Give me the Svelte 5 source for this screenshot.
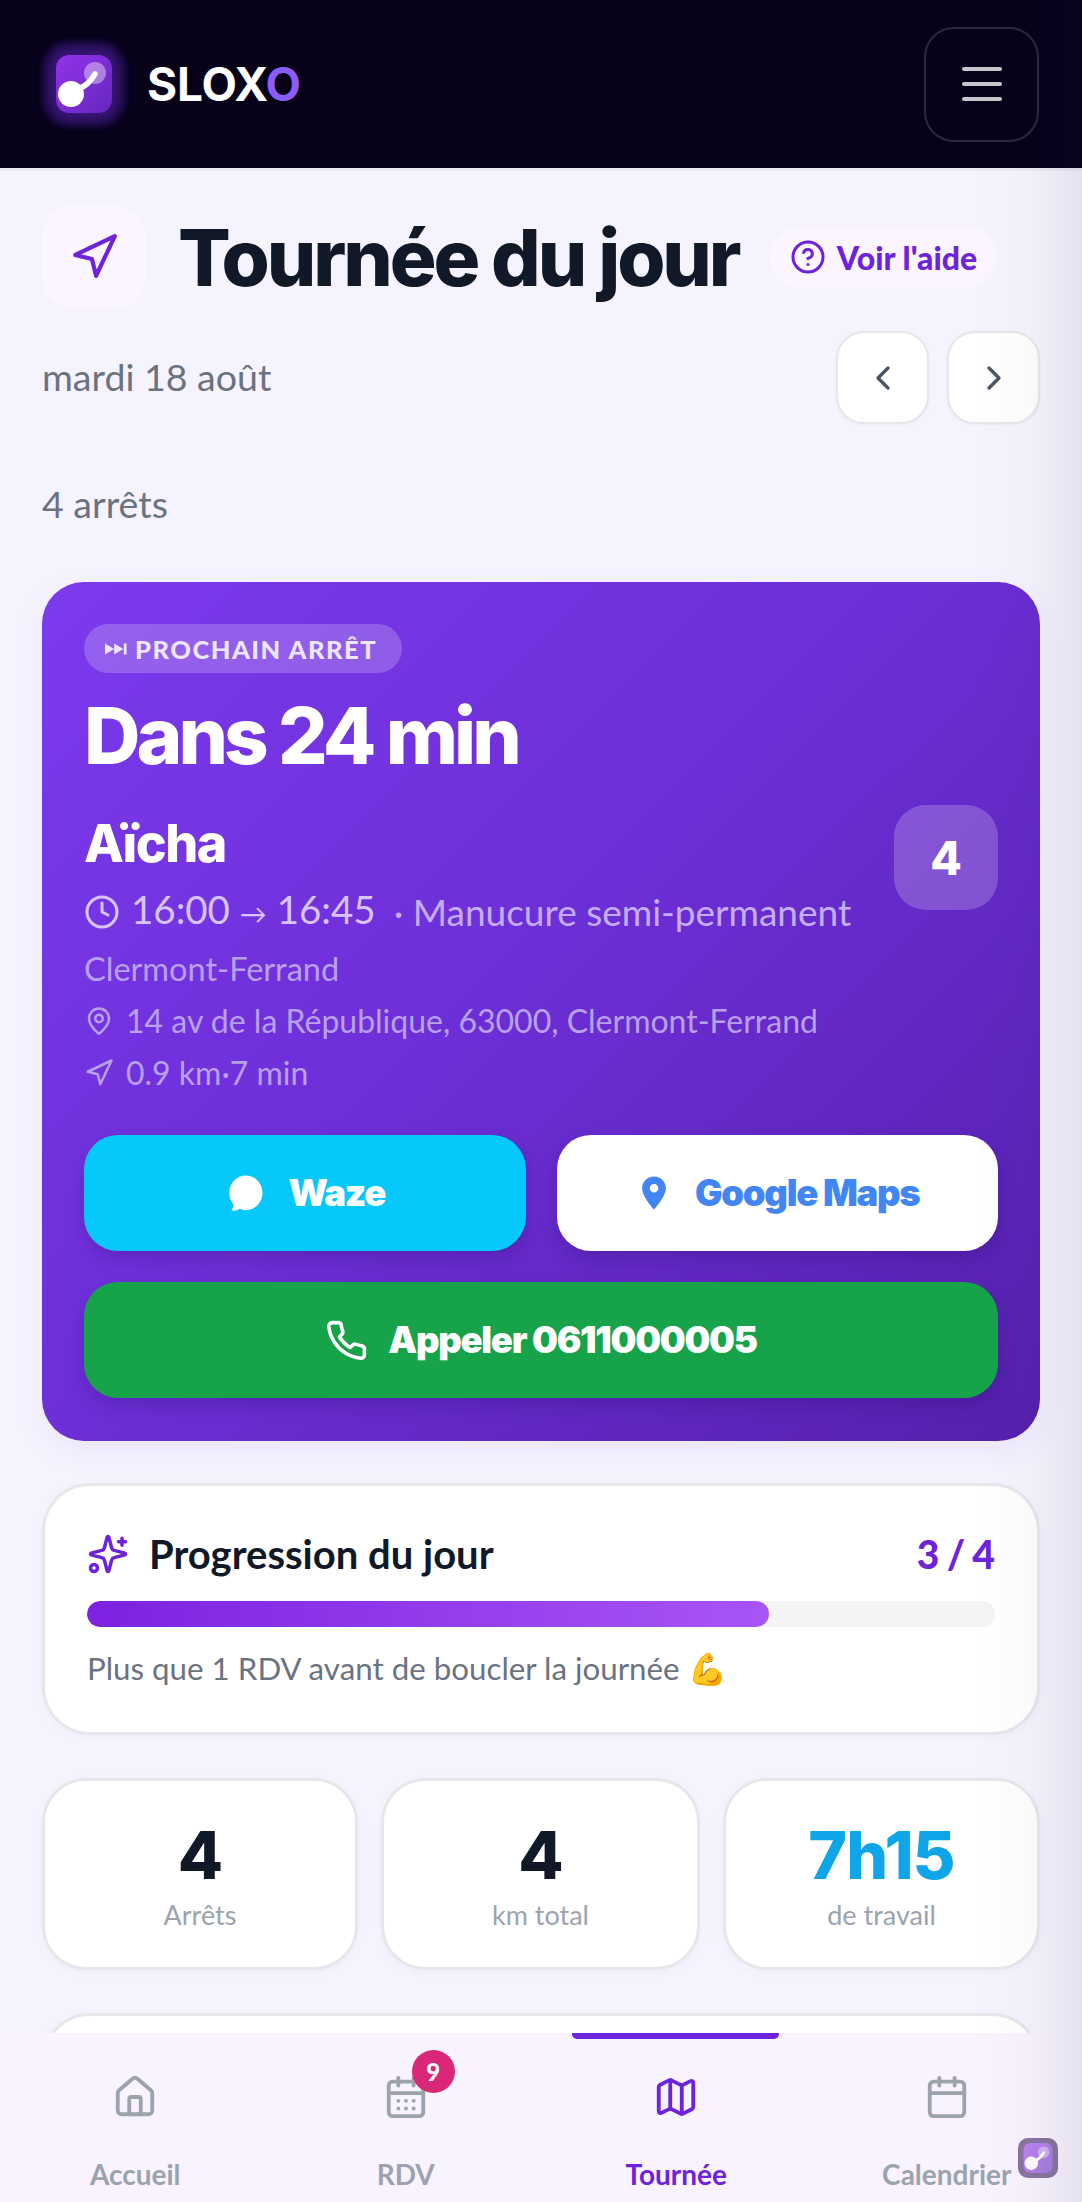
<script>
  const stats = [
    { value: '4', label: 'Arrêts', cls: '' },
    { value: '4', label: 'km total', cls: '' },
    { value: '7h15', label: 'de travail', cls: 'sky' }
  ];
</script>

{#snippet logo(cls)}
  <svg class={cls} viewBox="0 0 56 58" aria-hidden="true">
    <defs>
      <linearGradient id={cls + '-g'} x1="0" y1="0" x2="1" y2="1">
        <stop offset="0" stop-color="#9333ea" />
        <stop offset="1" stop-color="#6527bd" />
      </linearGradient>
    </defs>
    <rect x="0" y="0" width="56" height="58" rx="13" fill={'url(#' + cls + '-g)'} />
    <circle cx="39" cy="18" r="11" fill="#fff" fill-opacity=".4" />
    <path d="M22 34 Q32 31 39 19" fill="none" stroke="#fff" stroke-width="5.500" stroke-linecap="round" />
    <circle cx="15" cy="39" r="13" fill="#fff" />
  </svg>
{/snippet}

<div class="screen">
  <header class="top">
    <div class="brand">
      <div class="brand-mark">{@render logo('mark')}</div>
      <span class="brand-name">SLOX<span class="o">O</span></span>
    </div>
    <button class="menu" aria-label="Menu">
      <span></span><span></span><span></span>
    </button>
  </header>

  <main class="page">
    <section class="title-row">
      <div class="title-icon">
        <svg viewBox="0 0 24 24" class="ln nav-ic"><polygon points="3 11 22 2 13 21 11 13 3 11" /></svg>
      </div>
      <h1>Tournée du jour</h1>
      <div class="help">
        <svg viewBox="0 0 24 24" class="ln"><circle cx="12" cy="12" r="10" /><path d="M9.09 9a3 3 0 0 1 5.83 1c0 2-3 3-3 3" /><path d="M12 17h.01" /></svg>
        <span>Voir l'aide</span>
      </div>
    </section>

    <section class="date-row">
      <span class="date">mardi 18 août</span>
      <div class="arrows">
        <button aria-label="Précédent"><svg viewBox="0 0 24 24" class="ln"><path d="m15 18-6-6 6-6" /></svg></button>
        <button aria-label="Suivant"><svg viewBox="0 0 24 24" class="ln"><path d="m9 18 6-6-6-6" /></svg></button>
      </div>
    </section>

    <p class="count">4 arrêts</p>

    <section class="hero">
      <div class="pill">
        <svg viewBox="0 0 24 14" class="skip"><path d="M0 1l10 6-10 6zM10 1l10 6-10 6z" /><rect x="20.5" y="1" width="3" height="12" /></svg>
        <span>PROCHAIN ARRÊT</span>
      </div>
      <div class="eta">Dans 24 min</div>
      <div class="who">
        <div class="who-main">
          <div class="name">Aïcha</div>
          <div class="time">
            <svg viewBox="0 0 24 24" class="ln"><circle cx="12" cy="12" r="10" /><path d="M12 6v6l4 2" /></svg>
            <span class="t">16:00 <small>→</small> 16:45</span>
            <span class="svc">· Manucure semi-permanent</span>
          </div>
        </div>
        <div class="order">4</div>
      </div>
      <div class="city">Clermont-Ferrand</div>
      <div class="line addr">
        <svg viewBox="0 0 24 24" class="ln"><path d="M20 10c0 4.993-5.539 10.193-7.399 11.799a1 1 0 0 1-1.202 0C9.539 20.193 4 14.993 4 10a8 8 0 0 1 16 0" /><circle cx="12" cy="10" r="3" /></svg>
        <span>14 av de la République, 63000, Clermont-Ferrand</span>
      </div>
      <div class="line dist">
        <svg viewBox="0 0 24 24" class="ln"><polygon points="3 11 22 2 13 21 11 13 3 11" /></svg>
        <span>0.9 km·7 min</span>
      </div>
      <div class="nav-btns">
        <button class="btn waze">
          <svg viewBox="0 0 24 24" class="bubble"><path d="M12.500 2c5.300 0 9.500 4.400 9.500 9.800 0 5.500-4.200 10-9.500 10-1.300 0-2.500-.3-3.600-.8-1.200 1-2.900 1.300-4.700 1 .9-1 1.300-2.200 1.200-3.600C3.800 16.600 3 14.300 3 11.800 3 6.400 7.200 2 12.500 2z" /></svg>
          Waze
        </button>
        <button class="btn maps">
          <svg viewBox="0 0 24 24" class="pin"><path fill-rule="evenodd" d="M12 1.500c-4.300 0-7.500 3.300-7.500 7.500 0 5.300 7.500 13.500 7.500 13.500S19.500 14.300 19.500 9c0-4.200-3.200-7.500-7.500-7.500zm0 10.200a2.700 2.700 0 1 1 0-5.400 2.700 2.700 0 0 1 0 5.400z" /></svg>
          Google Maps
        </button>
      </div>
      <button class="btn call">
        <svg viewBox="0 0 24 24" class="ln"><path d="M22 16.920v3a2 2 0 0 1-2.180 2 19.790 19.790 0 0 1-8.630-3.070 19.500 19.500 0 0 1-6-6 19.790 19.790 0 0 1-3.070-8.670A2 2 0 0 1 4.110 2h3a2 2 0 0 1 2 1.720 12.840 12.840 0 0 0 .7 2.810 2 2 0 0 1-.45 2.110L8.090 9.910a16 16 0 0 0 6 6l1.270-1.270a2 2 0 0 1 2.110-.45 12.840 12.840 0 0 0 2.810.7A2 2 0 0 1 22 16.920z" /></svg>
        Appeler 0611000005
      </button>
    </section>

    <section class="card progress">
      <div class="prog-head">
        <svg viewBox="0 0 24 24" class="ln spark"><path d="M9.937 15.500A2 2 0 0 0 8.500 14.063l-6.135-1.582a.5.5 0 0 1 0-.962L8.500 9.936A2 2 0 0 0 9.937 8.500l1.582-6.135a.5.5 0 0 1 .963 0L14.063 8.500A2 2 0 0 0 15.500 9.937l6.135 1.581a.5.5 0 0 1 0 .964L15.500 14.063a2 2 0 0 0-1.437 1.437l-1.582 6.135a.5.5 0 0 1-.963 0z" /><path d="M20 3v4M22 5h-4" /><circle cx="4" cy="20" r="2" /></svg>
        <h2>Progression du jour</h2>
        <span class="ratio">3 / 4</span>
      </div>
      <div class="bar"><div class="fill"></div></div>
      <p>Plus que 1 RDV avant de boucler la journée 💪</p>
    </section>

    <section class="stats">
      {#each stats as s}
        <div class="card stat">
          <div class="val {s.cls}">{s.value}</div>
          <div class="lab">{s.label}</div>
        </div>
      {/each}
    </section>

    <section class="card next"></section>
  </main>

  <nav class="tabs">
    <div class="tab">
      <svg viewBox="0 0 24 24" class="ln"><path d="M15 21v-8a1 1 0 0 0-1-1h-4a1 1 0 0 0-1 1v8" /><path d="M3 10a2 2 0 0 1 .709-1.528l7-5.999a2 2 0 0 1 2.582 0l7 5.999A2 2 0 0 1 21 10v9a2 2 0 0 1-2 2H5a2 2 0 0 1-2-2z" /></svg>
      <span>Accueil</span>
    </div>
    <div class="tab">
      <div class="ic-wrap">
        <svg viewBox="0 0 24 24" class="ln"><path d="M8 2v4M16 2v4" /><rect x="3" y="4" width="18" height="18" rx="2" /><path d="M3 10h18M8 14h.01M12 14h.01M16 14h.01M8 18h.01M12 18h.01M16 18h.01" /></svg>
        <b class="badge">9</b>
      </div>
      <span>RDV</span>
    </div>
    <div class="tab on">
      <i class="ind"></i>
      <svg viewBox="0 0 24 24" class="ln"><path d="M14.106 5.553a2 2 0 0 0 1.788 0l3.659-1.830A1 1 0 0 1 21 4.619v12.764a1 1 0 0 1-.553.894l-4.553 2.277a2 2 0 0 1-1.788 0l-4.212-2.106a2 2 0 0 0-1.788 0l-3.659 1.830A1 1 0 0 1 3 19.381V6.618a1 1 0 0 1 .553-.894l4.553-2.277a2 2 0 0 1 1.788 0z" /><path d="M15 5.764v15M9 3.236v15" /></svg>
      <span>Tournée</span>
    </div>
    <div class="tab">
      <svg viewBox="0 0 24 24" class="ln"><path d="M8 2v4M16 2v4" /><rect x="3" y="4" width="18" height="18" rx="2" /><path d="M3 10h18" /></svg>
      <span>Calendrier</span>
    </div>
  </nav>

  <div class="edge"></div>
  <div class="widget">{@render logo('mini')}</div>
</div>

<style>
  :global(body) { margin: 0; }
  .screen {
    position: relative;
    width: 1082px;
    height: 2202px;
    overflow: hidden;
    background: #f5f4fe;
    font-family: "Lato", "Noto Sans", sans-serif;
    color: #111827;
  }
  h1, h2, p { margin: 0; }
  button { font: inherit; padding: 0; cursor: pointer; }
  .ln { fill: none; stroke: currentColor; stroke-width: 2; stroke-linecap: round; stroke-linejoin: round; flex: none; }

  .top {
    height: 168px;
    background: #07021a;
    border-bottom: 3px solid #e9ebf4;
    display: flex;
    align-items: center;
    justify-content: space-between;
    padding: 0 43px 0 56px;
  }
  .brand { display: flex; align-items: center; gap: 35px; }
  .brand-mark {
    width: 56px; height: 58px;
    border-radius: 13px;
    box-shadow: 0 0 12px 8px rgba(110,40,215,.4), 0 0 6px 14px rgba(60,25,130,.34);
  }
  .mark { width: 56px; height: 58px; display: block; }
  .brand-name { color: #fff; font-family: "Inter", sans-serif; font-weight: 700; font-size: 46px; letter-spacing: -.2px; }
  .o { color: #8b5cf6; }
  .menu {
    width: 115px; height: 115px;
    border: 2px solid #2c2938;
    border-radius: 30px;
    background: transparent;
    display: flex; flex-direction: column; align-items: center; justify-content: center; gap: 11px;
  }
  .menu span { width: 40px; height: 4px; border-radius: 2px; background: #c6c8ce; }

  .page { padding: 0 42px; }
  .title-row { display: flex; align-items: center; margin-top: 34px; height: 104px; }
  .title-icon {
    width: 104px; height: 104px; border-radius: 32px; background: #faf5ff;
    display: flex; align-items: center; justify-content: center; color: #6d22dc; flex: none;
  }
  .nav-ic { width: 50px; height: 50px; }
  h1 {
    margin-left: 32px;
    font-family: "Inter", sans-serif;
    font-weight: 800;
    font-size: 78px;
    letter-spacing: -3.100px;
    color: #111827;
    white-space: nowrap;
    width: 560px;
  }
  .help {
    margin-left: 32px;
    height: 61px; width: 227px; box-sizing: border-box;
    border-radius: 30px;
    background: #faf5ff;
    color: #6d22dc;
    display: flex; align-items: center; justify-content: center; gap: 11px;
    font-weight: 900; font-size: 32px;
    white-space: nowrap;
  }
  .help svg { width: 36px; height: 36px; }

  .date-row { display: flex; align-items: center; justify-content: space-between; margin-top: 22px; height: 93px; }
  .date { font-size: 37.500px; color: #6b7280; margin-bottom: 3px; }
  .arrows { display: flex; gap: 18px; }
  .arrows button {
    width: 93px; height: 93px; box-sizing: border-box;
    border: 2px solid #e5e7eb; border-radius: 28px; background: #fff; color: #4b5563;
    display: flex; align-items: center; justify-content: center;
    box-shadow: 0 1px 3px rgba(0,0,0,.05);
  }
  .arrows svg { width: 40px; height: 40px; }

  .count { margin-top: 57px; font-size: 37.500px; line-height: 46px; color: #6b7280; }

  .hero {
    margin-top: 55px;
    height: 859px;
    box-sizing: border-box;
    padding: 42px 42px 0;
    border-radius: 42px;
    background: linear-gradient(135deg, #7c3aed 0%, #6d2fd8 45%, #5520ac 100%);
    color: #fff;
    box-shadow: 0 10px 30px rgba(124,58,237,.08);
  }
  .pill {
    display: inline-flex; align-items: center; gap: 8px;
    height: 49px; width: 318px; box-sizing: border-box; padding-left: 21px;
    border-radius: 25px;
    background: rgba(255,255,255,.2);
    color: #ede6ff;
    font-weight: 900; font-size: 25.500px; letter-spacing: 1.500px;
    vertical-align: top;
    white-space: nowrap;
  }
  .skip { width: 22px; height: 14px; fill: #ede6ff; flex: none; }
  .eta {
    margin-top: 15px;
    font-family: "Inter", sans-serif;
    font-weight: 800; font-size: 78px; line-height: 96px; letter-spacing: -3.900px;
    white-space: nowrap;
  }
  .who { display: flex; justify-content: space-between; align-items: flex-start; margin-top: 21px; }
  .who-main { padding-top: 8px; }
  .name { font-family: "Inter", sans-serif; font-weight: 800; font-size: 52px; line-height: 62px; letter-spacing: -1.500px; }
  .time {
    display: flex; align-items: center; margin-top: 11px;
    color: #d7c4fb; font-size: 37px; line-height: 46px; white-space: nowrap;
  }
  .time svg { width: 36px; height: 36px; margin-right: 11px; }
  .t { font-size: 38.500px; }
  .t small { font-size: 27px; }
  .svc { margin-left: 18px; color: #c5adf3; }
  .order {
    width: 104px; height: 105px; border-radius: 32px;
    background: rgba(255,255,255,.2);
    display: flex; align-items: center; justify-content: center;
    font-family: "Inter", sans-serif; font-weight: 800; font-size: 46px;
    flex: none;
  }
  .city { margin-top: 13px; font-size: 32.500px; line-height: 38px; color: #b9a0ec; }
  .line {
    display: flex; align-items: center; gap: 12px;
    font-size: 32px; line-height: 38px; color: #b9a0ec; white-space: nowrap;
  }
  .line svg { width: 30px; height: 30px; flex: none; }
  .addr { margin-top: 14px; }
  .dist { margin-top: 14px; }

  .btn {
    display: flex; align-items: center; justify-content: center;
    height: 116px; border: 0; border-radius: 34px;
    font-family: "Inter", sans-serif; font-weight: 900; font-size: 36.500px; letter-spacing: -1.300px;
    box-shadow: 0 8px 18px rgba(30,0,90,.2);
    white-space: nowrap;
  }
  .nav-btns { display: grid; grid-template-columns: 1fr 1fr; gap: 31px; margin-top: 43px; }
  .waze { background: #06c8fa; color: #fff; gap: 22px; }
  .bubble { width: 42px; height: 42px; fill: #fff; }
  .maps { background: #fff; color: #4285f4; gap: 22px; }
  .pin { width: 38px; height: 40px; fill: #4285f4; }
  .call { width: 100%; margin-top: 31px; background: #16a34a; color: #fff; gap: 20px; }
  .call svg { width: 43px; height: 43px; }

  .card {
    background: #fff;
    border: 3px solid #e5e7eb;
    box-sizing: border-box;
    box-shadow: 0 2px 8px rgba(60,50,120,.04);
  }
  .progress {
    margin-top: 42px;
    height: 252px;
    border-radius: 48px;
    padding: 45px 42px 0 42px;
  }
  .prog-head { display: flex; align-items: center; height: 46px; }
  .spark { width: 42px; height: 42px; color: #6d22dc; }
  h2 { margin-left: 20px; font-size: 40px; font-weight: 700; color: #111827; white-space: nowrap; flex: 1; }
  .ratio { font-size: 39px; font-weight: 900; color: #6d22dc; letter-spacing: 0; word-spacing: -2px; }
  .bar { height: 26px; border-radius: 13px; background: #f3f4f6; margin-top: 24px; overflow: hidden; }
  .fill { width: 682px; height: 100%; border-radius: 13px; background: linear-gradient(90deg, #7c22e0, #a855f7); }
  .progress p { margin-top: 20px; font-size: 31.300px; line-height: 42px; color: #6b7280; white-space: nowrap; }

  .stats { display: grid; grid-template-columns: 316px 319px 317px; gap: 23px; margin-top: 43px; }
  .stat {
    height: 192px; border-radius: 44px;
    display: flex; flex-direction: column; align-items: center;
    padding-top: 35px;
  }
  .val { font-family: "Inter", sans-serif; font-weight: 800; font-size: 66px; line-height: 78px; color: #111827; letter-spacing: -1px; }
  .sky { color: #0ea5e9; }
  .lab { margin-top: 4px; font-size: 27px; line-height: 34px; color: #9ca3af; }
  .next { margin-top: 43px; height: 200px; border-radius: 48px; }

  .tabs {
    position: absolute; left: 0; right: 0; bottom: 0; height: 169px;
    background: #f8f3fe;
    display: grid; grid-template-columns: repeat(4, 1fr);
    padding: 0;
  }
  .tab {
    position: relative;
    display: flex; flex-direction: column; align-items: center;
    padding-top: 41px;
    color: #9ca3af;
    font-size: 28px; font-weight: 700;
  }
  .tab svg { width: 46px; height: 46px; display: block; }
  .tab span { margin-top: 36px; line-height: 36px; white-space: nowrap; }
  .tab.on { color: #6d22dc; }
  .ind {
    position: absolute; top: 0; left: 31px; width: 207px; height: 6px;
    background: #6d22dc; border-radius: 0 0 5px 5px;
  }
  .ic-wrap { position: relative; }
  .badge {
    position: absolute; left: 29px; top: -24px;
    width: 43px; height: 43px; border-radius: 50%;
    background: #db2777; color: #fff;
    display: flex; align-items: center; justify-content: center;
    font-size: 24px; font-weight: 900;
  }
  .edge {
    position: absolute; top: 0; bottom: 0; right: 0; width: 110px;
    pointer-events: none;
    background: linear-gradient(90deg, rgba(20,20,60,0) 0%, rgba(20,20,60,.015) 50%, rgba(20,20,60,.08) 100%);
  }
  .widget {
    position: absolute; left: 1018px; top: 2138px;
    width: 40px; height: 40px; border-radius: 10px;
    background: #3a1a5c;
    opacity: .58;
    display: flex; align-items: center; justify-content: center;
  }
  .mini { width: 30px; height: 30px; display: block; }
</style>
